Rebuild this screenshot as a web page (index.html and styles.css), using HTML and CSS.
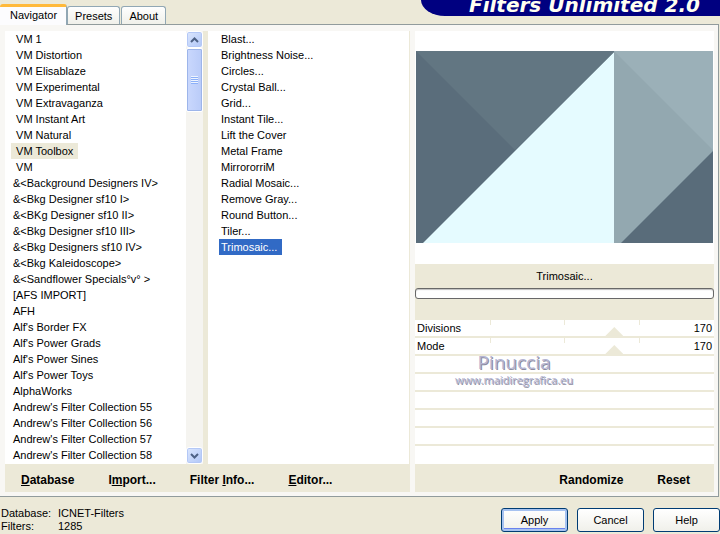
FILE: index.html
```html
<!DOCTYPE html>
<html lang="en">

<head>
    <meta charset="UTF-8">
    <meta name="viewport" content="width=device-width, initial-scale=1.0">
    <title>Filters Unlimited 2.0</title>
    <link rel="stylesheet" href="styles.css">
</head>

<body>
    <header>
        <nav class="tabs">
            <button class="tab active">Navigator</button>
            <button class="tab">Presets</button>
            <button class="tab">About</button>
        </nav>
        <h1>Filters Unlimited 2.0</h1>
    </header>

    <main>
        <section class="browser">
            <div class="lists">
                <ul class="list categories">
                    <li><button> VM 1</button></li>
                    <li><button> VM Distortion</button></li>
                    <li><button> VM Elisablaze</button></li>
                    <li><button> VM Experimental</button></li>
                    <li><button> VM Extravaganza</button></li>
                    <li><button> VM Instant Art</button></li>
                    <li><button> VM Natural</button></li>
                    <li><button class="current"> VM Toolbox</button></li>
                    <li><button> VM</button></li>
                    <li><button>&amp;&lt;Background Designers IV&gt;</button></li>
                    <li><button>&amp;&lt;Bkg Designer sf10 I&gt;</button></li>
                    <li><button>&amp;&lt;BKg Designer sf10 II&gt;</button></li>
                    <li><button>&amp;&lt;Bkg Designer sf10 III&gt;</button></li>
                    <li><button>&amp;&lt;Bkg Designers sf10 IV&gt;</button></li>
                    <li><button>&amp;&lt;Bkg Kaleidoscope&gt;</button></li>
                    <li><button>&amp;&lt;Sandflower Specials°v° &gt;</button></li>
                    <li><button>[AFS IMPORT]</button></li>
                    <li><button>AFH</button></li>
                    <li><button>Alf's Border FX</button></li>
                    <li><button>Alf's Power Grads</button></li>
                    <li><button>Alf's Power Sines</button></li>
                    <li><button>Alf's Power Toys</button></li>
                    <li><button>AlphaWorks</button></li>
                    <li><button>Andrew's Filter Collection 55</button></li>
                    <li><button>Andrew's Filter Collection 56</button></li>
                    <li><button>Andrew's Filter Collection 57</button></li>
                    <li><button>Andrew's Filter Collection 58</button></li>
                </ul>
                <div class="scrollbar">
                    <button class="arrow" aria-label="Scroll up">
                        <svg width="9" height="6" viewBox="0 0 9 6"><path d="M1 5l3.500-3.500L8 5" /></svg>
                    </button>
                    <div class="handle"><span class="grip"></span></div>
                    <button class="arrow down" aria-label="Scroll down">
                        <svg width="9" height="6" viewBox="0 0 9 6"><path d="M1 1l3.500 3.500L8 1" /></svg>
                    </button>
                </div>
                <ul class="list filters">
                    <li><button>Blast...</button></li>
                    <li><button>Brightness Noise...</button></li>
                    <li><button>Circles...</button></li>
                    <li><button>Crystal Ball...</button></li>
                    <li><button>Grid...</button></li>
                    <li><button>Instant Tile...</button></li>
                    <li><button>Lift the Cover</button></li>
                    <li><button>Metal Frame</button></li>
                    <li><button>MirrororriM</button></li>
                    <li><button>Radial Mosaic...</button></li>
                    <li><button>Remove Gray...</button></li>
                    <li><button>Round Button...</button></li>
                    <li><button>Tiler...</button></li>
                    <li><button class="selected">Trimosaic...</button></li>
                </ul>
            </div>
            <div class="toolbar">
                <button><u>D</u>atabase</button>
                <button>I<u>m</u>port...</button>
                <button>Filter <u>I</u>nfo...</button>
                <button><u>E</u>ditor...</button>
            </div>
        </section>

        <section class="settings">
            <div class="preview">
                <svg viewBox="0 0 297 192" preserveAspectRatio="none">
                    <rect width="297" height="192" fill="#e5fbff" />
                    <path d="M0 0h198v1L7 192H0z" fill="#5a6d7b" />
                    <path d="M0 0h198v1L99 99z" fill="#627682" />
                    <path d="M198 0h99v192h-99z" fill="#93a8b0" />
                    <path d="M198 0h99v99z" fill="#9bb0b8" />
                    <path d="M297 100v92h-92z" fill="#596c7a" />
                </svg>
            </div>
            <div class="status">
                <h2>Trimosaic...</h2>
                <div class="progress"></div>
            </div>
            <div class="sliders">
                <div class="slider">
                    <label for="divisions">Divisions</label>
                    <input type="range" id="divisions" min="0" max="255" value="170">
                    <output for="divisions">170</output>
                </div>
                <div class="slider">
                    <label for="mode">Mode</label>
                    <input type="range" id="mode" min="0" max="255" value="170">
                    <output for="mode">170</output>
                </div>
                <div class="slider empty"></div>
                <div class="slider empty"></div>
                <div class="slider empty"></div>
                <div class="slider empty"></div>
                <div class="slider empty"></div>
                <div class="slider empty"></div>
                <div class="signature">
                    <span class="name">Pinuccia</span>
                    <span class="site">www.maidiregrafica.eu</span>
                </div>
            </div>
            <div class="toolbar right">
                <button>Randomize</button>
                <button>Reset</button>
            </div>
        </section>
    </main>

    <footer>
        <dl>
            <dt>Database:</dt>
            <dd>ICNET-Filters</dd>
            <dt>Filters:</dt>
            <dd>1285</dd>
        </dl>
        <div class="actions">
            <button class="default">Apply</button>
            <button>Cancel</button>
            <button>Help</button>
        </div>
    </footer>
</body>

</html>
```
FILE: styles.css
```css
* {
    box-sizing: border-box;
}

body {
    margin: 0;
    min-height: 100vh;
    display: flex;
    flex-direction: column;
    background-color: #ece9d8;
    color: #000;
    font-family: "Liberation Sans", Arial, sans-serif;
    font-size: 11px;
    overflow: hidden;
}

button {
    margin: 0;
    padding: 0;
    border: 0;
    background: none;
    color: inherit;
    font: inherit;
    white-space: pre;
}

header {
    height: 24px;
    display: flex;
    justify-content: space-between;
    align-items: flex-end;
}

/* Tabs */
.tabs {
    display: flex;
    align-items: flex-end;
    gap: 1px;
}

.tab {
    height: 18px;
    padding: 1px 7px 0;
    border: 1px solid #91a7b4;
    border-bottom: 0;
    border-radius: 3px 3px 0 0;
    background: linear-gradient(#fefefe, #f0f0ea);
}

.tab.active {
    position: relative;
    height: 21px;
    margin: 0 -1px -1px 0;
    padding: 0 9px 3px 10px;
    border-top: 3px solid #ffb93a;
    border-left: 0;
    background: #fcfcfe;
}

h1 {
    align-self: flex-start;
    width: 299px;
    height: 16px;
    margin: 0;
    padding-left: 48px;
    border-bottom-left-radius: 24px 16px;
    background-color: #000080;
    color: #fffff0;
    font: italic bold 20px/10px "DejaVu Sans", sans-serif;
    white-space: nowrap;
}

main {
    flex: 1;
    display: grid;
    grid-template-columns: 405fr 299fr;
    gap: 5px;
    margin-right: 1px;
    padding: 6px 4px 4px 5px;
    border: 1px solid #919b9c;
    border-left: 0;
    background-color: #f8f7f4;
}

.browser,
.settings {
    display: flex;
    flex-direction: column;
    min-width: 0;
}

.lists {
    flex: 1;
    display: flex;
    background-color: #fff;
}

/* Filter lists */
.list {
    margin: 0;
    padding: 0 0 0 6px;
    list-style: none;
}

.list li {
    height: 16px;
}

.list button {
    height: 16px;
    padding: 0 5px 0 2px;
    line-height: 16px;
}

.list .current {
    background-color: #ece9d8;
}

.list .selected {
    background-color: #316ac5;
    color: #fff;
}

.categories {
    width: 181px;
}

.filters {
    flex: 1;
    padding-left: 11px;
    border-left: 5px solid #ece9d8;
    border-right: 1px solid #ece9d8;
}

.scrollbar {
    width: 17px;
    display: flex;
    flex-direction: column;
    background-color: #f5f4f0;
}

.arrow {
    height: 17px;
    display: flex;
    align-items: center;
    justify-content: center;
    border: 1px solid #fff;
    border-radius: 3px;
    background: linear-gradient(135deg, #dce7fe, #b0c6f7);
    box-shadow: inset 0 0 0 1px #b4c8f6;
}

.arrow svg {
    fill: none;
    stroke: #4d6185;
    stroke-width: 2;
}

.arrow.down {
    margin-top: auto;
}

.handle {
    height: 64px;
    display: flex;
    align-items: center;
    justify-content: center;
    border: 1px solid #fff;
    border-radius: 2px;
    background: linear-gradient(90deg, #cad8fd, #b9cbf8);
    box-shadow: inset 0 0 0 1px #9db5ea;
}

.grip {
    width: 7px;
    height: 8px;
    background: repeating-linear-gradient(#eef4fe 0 1px, #8cb0f8 1px 2px);
}

.toolbar {
    height: 28px;
    display: flex;
    align-items: center;
    gap: 34px;
    padding: 3px 16px 0;
    background-color: #ece9d8;
    font-size: 12px;
    font-weight: bold;
}

.toolbar.right {
    justify-content: flex-end;
    padding-right: 24px;
}

/* Preview and settings */
.preview {
    height: 233px;
    padding: 20px 1px;
    background-color: #fff;
}

.preview svg {
    display: block;
    width: 100%;
    height: 192px;
}

.status {
    height: 56px;
    padding-top: 4px;
    background-color: #ece9d8;
}

h2 {
    margin: 0;
    font-size: 11px;
    font-weight: normal;
    line-height: 16px;
    text-align: center;
}

.progress {
    height: 11px;
    margin-top: 4px;
    border: 1px solid #686868;
    border-radius: 3px;
    background-color: #fff;
    box-shadow: inset 0 1px 1px #bebebe;
}

.sliders {
    position: relative;
    flex: 1;
    background-color: #fff;
}

.slider {
    height: 18px;
    display: grid;
    grid-template-columns: 1fr 1fr;
    border-bottom: 2px solid #ece9d8;
    line-height: 16px;
    background-image: linear-gradient(#ece9d8, #ece9d8), linear-gradient(#ece9d8, #ece9d8), linear-gradient(#ece9d8, #ece9d8);
    background-size: 1px 5px;
    background-position: 25% 0, 50% 0, 75% 0;
    background-repeat: no-repeat;
}

.slider.empty {
    background-image: none;
}

.slider:nth-child(8) {
    border-bottom: 0;
}

.slider label {
    grid-area: 1 / 1;
    padding-left: 2px;
}

.slider output {
    grid-area: 1 / 2;
    padding-right: 2px;
    text-align: right;
}

/* wider than the row by half a thumb on each side */
.slider input {
    grid-area: 1 / 1 / 2 / 3;
    -webkit-appearance: none;
    appearance: none;
    height: 16px;
    margin: 0 -9px;
    background: none;
    outline: none;
}

.slider input::-webkit-slider-thumb {
    -webkit-appearance: none;
    width: 18px;
    height: 9px;
    margin-top: 7px;
    background-color: #ece9d8;
    clip-path: polygon(50% 0, 100% 100%, 0 100%);
}

.signature {
    position: absolute;
    top: 32px;
    left: 40px;
    display: flex;
    flex-direction: column;
    align-items: center;
    color: #b4b4d2;
    font-family: "Comic Sans MS", "Open Sans", sans-serif;
    text-shadow: 1px 1px 0 #8c8ca0;
}

.name {
    font-size: 19px;
    line-height: 20px;
}

.site {
    font-size: 11px;
    line-height: 15px;
}

footer {
    height: 38px;
    display: flex;
    justify-content: space-between;
    align-items: center;
}

dl {
    display: grid;
    grid-template-columns: 57px auto;
    margin: 8px 0 0 1px;
    line-height: 13px;
}

dd {
    margin: 0;
}

.actions {
    display: flex;
    gap: 9px;
    margin-top: 8px;
}

.actions button {
    width: 67px;
    height: 24px;
    border: 1px solid #003c74;
    border-radius: 3px;
    background: linear-gradient(#fff, #f0f0ea);
}

.actions .default {
    box-shadow: inset 0 0 0 2px #a6c2f0, inset 0 -2px 0 1px #6982ee;
}
```
